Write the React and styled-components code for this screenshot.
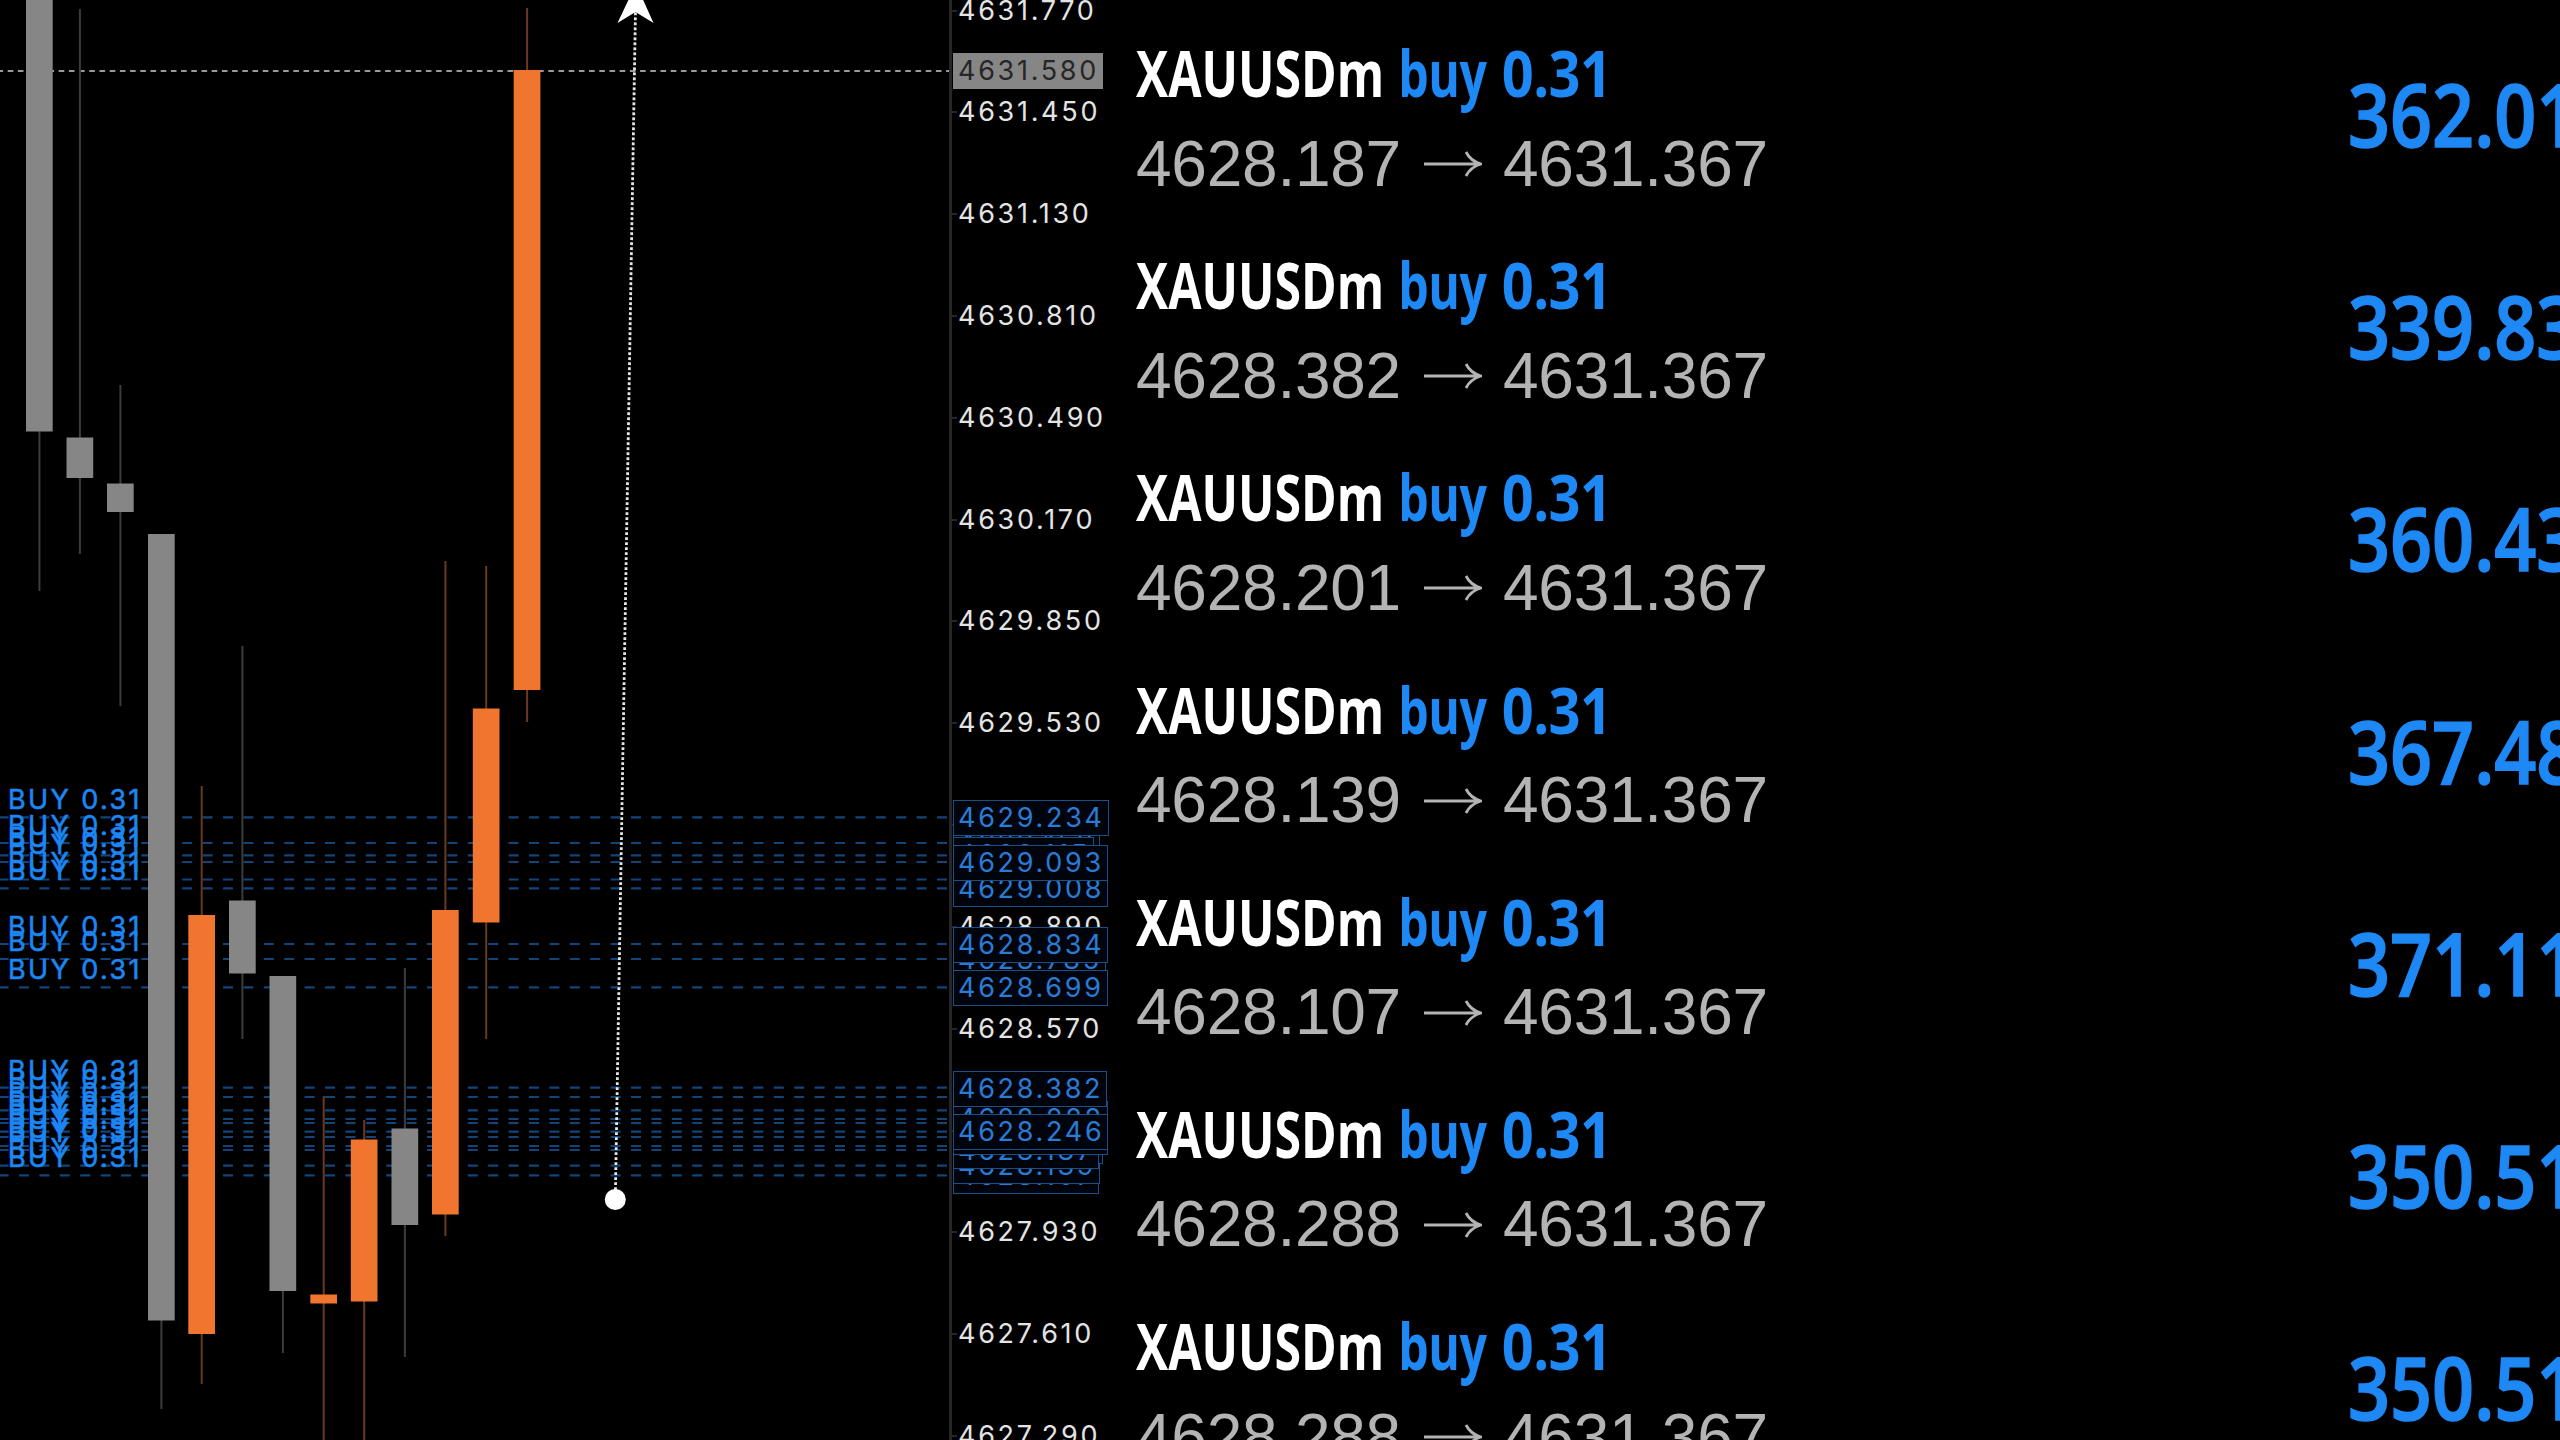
import React from 'react';
import styled, { createGlobalStyle } from 'styled-components';

const GlobalStyle = createGlobalStyle`
  body {
    margin: 0;
    background: #000;
    overflow: hidden;
  }
`;

const Screen = styled.div`
  display: flex;
  width: 2560px;
  height: 1440px;
  overflow: hidden;
  background: #000;
`;

const ChartArea = styled.div`
  width: 949px;
  height: 1440px;
  flex: none;
`;

const ChartSvg = styled.svg`
  display: block;
`;

const OrderText = styled.text`
  font-family: Inter, sans-serif;
  font-size: 27px;
  letter-spacing: 2.4px;
  fill: #1c86f2;
  stroke: #1c86f2;
  stroke-width: 0.6px;
`;

const PriceScale = styled.div`
  position: relative;
  box-sizing: border-box;
  width: 173px;
  height: 1440px;
  flex: none;
  border-left: 3px solid #262626;
  font-family: Inter, sans-serif;
  font-size: 27px;
  letter-spacing: 2.7px;
  line-height: 36px;
`;

// The labels sit at their price on the scale and may cover each other
const PriceLabel = styled.div`
  position: absolute;
  left: 6px;
  top: ${({ $y }) => $y - 18}px;
  color: #e4e4e4;

  &::before {
    content: '';
    position: absolute;
    left: -6px;
    top: 17px;
    width: 5px;
    height: 2px;
    background: #262626;
  }
`;

const PriceTag = styled.div`
  position: absolute;
  box-sizing: border-box;
  left: 1px;
  top: ${({ $y }) => $y - 18}px;
  height: 36px;
  line-height: 34px;
  padding: 0 3px 0 4px;
  border: 1px solid ${({ $current }) => ($current ? '#868686' : '#1a5086')};
  background: ${({ $current }) => ($current ? '#868686' : '#00050d')};
  color: ${({ $current }) => ($current ? '#262626' : '#2b7bd4')};
`;

const History = styled.div`
  display: flex;
  flex-direction: column;
  flex: 1;
  min-width: 0;
  padding: 28px 0 0 14px;
`;

const Deal = styled.div`
  display: flex;
  justify-content: space-between;
  flex: none;
  height: 212.2px;
`;

const DealInfo = styled.div`
  display: flex;
  flex-direction: column;
`;

const DealTitle = styled.div`
  height: 91px;
  line-height: 90px;
  font-family: 'Open Sans', sans-serif;
  font-size: 64px;
  font-weight: 700;
  white-space: nowrap;
  color: #fff;
  transform: scaleX(0.754);
  transform-origin: left;
`;

const Side = styled.span`
  margin-left: 2px;
  letter-spacing: -0.6px;
  color: #1e88f5;
`;

const Lots = styled.span`
  display: inline-block;
  margin-left: 4px;
  transform: scaleX(1.16);
  transform-origin: left;
`;

const DealPrices = styled.div`
  display: flex;
  align-items: center;
  height: 90px;
  font-family: 'Liberation Sans', Arial, sans-serif;
  font-size: 64px;
  letter-spacing: -0.25px;
  line-height: 89px;
  color: #b4b4b4;
`;

const ArrowIcon = styled.svg`
  margin: 0 21px 0 23px;
`;

const Profit = styled.div`
  flex: none;
  width: 212px;
  height: 171px;
  line-height: 171px;
  font-family: 'Open Sans', sans-serif;
  font-size: 86px;
  font-weight: 600;
  white-space: nowrap;
  color: #1e88f5;
  -webkit-text-stroke: 1.6px #1e88f5;
  transform: scaleX(0.855);
  transform-origin: left;
`;

const candles = [
  { x: 26, high: 0, top: -4, bottom: 431.5, low: 591 },
  { x: 66.5, high: 9, top: 437.5, bottom: 478, low: 554 },
  { x: 107, high: 385, top: 483.5, bottom: 512, low: 706 },
  { x: 148, high: 534, top: 534, bottom: 1320.5, low: 1409 },
  { x: 188.3, high: 786, top: 915, bottom: 1334, low: 1384, up: true },
  { x: 229, high: 646, top: 900.5, bottom: 973.5, low: 1039 },
  { x: 269.5, high: 976, top: 976, bottom: 1291, low: 1353 },
  { x: 310.3, high: 1096, top: 1294.5, bottom: 1303.5, low: 1440, up: true },
  { x: 350.8, high: 1120, top: 1139.5, bottom: 1301.5, low: 1440, up: true },
  { x: 391.5, high: 968, top: 1128.5, bottom: 1225, low: 1357 },
  { x: 432, high: 561, top: 910, bottom: 1214.5, low: 1236, up: true },
  { x: 472.8, high: 566, top: 708.5, bottom: 922.5, low: 1039, up: true },
  { x: 513.7, high: 8, top: 70, bottom: 690, low: 722, up: true },
];

const orderLines = [
  817.3, 843, 855.3, 862, 879.5, 888.3, 944, 959, 987.3,
  1087.7, 1097, 1110.3, 1119, 1123, 1131.7, 1137, 1146, 1150, 1165.7, 1175.3,
];

const scaleLabels = [
  '4631.770', '4631.450', '4631.130', '4630.810', '4630.490', '4630.170', '4629.850', '4629.530',
  '4629.210', '4628.890', '4628.570', '4628.250', '4627.930', '4627.610', '4627.290',
];

// Listed in paint order, the last one stays on top
const orderTags = [
  { price: '4629.152', y: 843 },
  { price: '4629.115', y: 855 },
  { price: '4629.234', y: 817.5 },
  { price: '4629.038', y: 879 },
  { price: '4629.008', y: 888.5 },
  { price: '4629.093', y: 862.5 },
  { price: '4628.785', y: 959.5 },
  { price: '4628.834', y: 944.5 },
  { price: '4628.699', y: 988 },
  { price: '4628.107', y: 1175.5 },
  { price: '4628.139', y: 1166 },
  { price: '4628.201', y: 1146 },
  { price: '4628.187', y: 1150.5 },
  { price: '4628.228', y: 1137 },
  { price: '4628.352', y: 1097 },
  { price: '4628.310', y: 1110 },
  { price: '4628.268', y: 1123 },
  { price: '4628.288', y: 1119 },
  { price: '4628.382', y: 1088.5 },
  { price: '4628.246', y: 1132 },
];

const deals = [
  { open: '4628.187', profit: '362.01' },
  { open: '4628.382', profit: '339.83' },
  { open: '4628.201', profit: '360.43' },
  { open: '4628.139', profit: '367.48' },
  { open: '4628.107', profit: '371.11' },
  { open: '4628.288', profit: '350.51' },
  { open: '4628.288', profit: '350.51' },
];

const Candle = ({ x, high, top, bottom, low, up }) => (
  <g>
    <rect x={x + 12.4} y={high} width="2" height={low - high} fill={up ? '#6b3a1c' : '#3c3c3c'} />
    <rect x={x} y={top} width="26.7" height={bottom - top} fill={up ? '#f0752f' : '#868686'} />
  </g>
);

const Chart = () => (
  <ChartArea>
    <ChartSvg width="949" height="1440" viewBox="0 0 949 1440">
      <line x1="-2.5" y1="71" x2="949" y2="71" stroke="#9a9a9a" strokeWidth="2" strokeDasharray="5.6 4.6" />
      {orderLines.map((y) => (
        <line
          key={y}
          x1="-1.4"
          y1={y}
          x2="949"
          y2={y}
          stroke="#15508f"
          strokeOpacity="0.85"
          strokeWidth="2.2"
          strokeDasharray="10 10.4"
        />
      ))}
      {orderLines.map((y) => (
        <OrderText key={y} x="8" y={y - 8}>BUY 0.31</OrderText>
      ))}
      {candles.map((candle) => (
        <Candle key={candle.x} {...candle} />
      ))}
      <line x1="615.3" y1="1200" x2="635.5" y2="10" stroke="#e6e6e6" strokeWidth="2.8" strokeDasharray="2.8 2.2" />
      <path d="M636 -16 L653.5 23 L635.5 12 L617.5 23 Z" fill="#fff" />
      <circle cx="615.3" cy="1199.5" r="10.5" fill="#fff" />
    </ChartSvg>
  </ChartArea>
);

const App = () => (
  <>
    <GlobalStyle />
    <Screen>
      <Chart />
      <PriceScale>
        {scaleLabels.map((label, i) => (
          <PriceLabel key={label} $y={10.5 + i * 101.83}>{label}</PriceLabel>
        ))}
        <PriceTag $current $y={70.5}>4631.580</PriceTag>
        {orderTags.map((tag) => (
          <PriceTag key={tag.price} $y={tag.y}>{tag.price}</PriceTag>
        ))}
      </PriceScale>
      <History>
        {deals.map((deal, i) => (
          <Deal key={i}>
            <DealInfo>
              <DealTitle>
                XAUUSDm <Side>buy <Lots>0.31</Lots></Side>
              </DealTitle>
              <DealPrices>
                {deal.open}
                <ArrowIcon width="58" height="28" viewBox="0 0 58 28" fill="none" stroke="#b4b4b4" strokeWidth="2.8">
                  <path d="M0 14H56M42 2C45 8 50 12 57 14C50 16 45 20 42 26" />
                </ArrowIcon>
                4631.367
              </DealPrices>
            </DealInfo>
            <Profit>{deal.profit}</Profit>
          </Deal>
        ))}
      </History>
    </Screen>
  </>
);

export default App;
